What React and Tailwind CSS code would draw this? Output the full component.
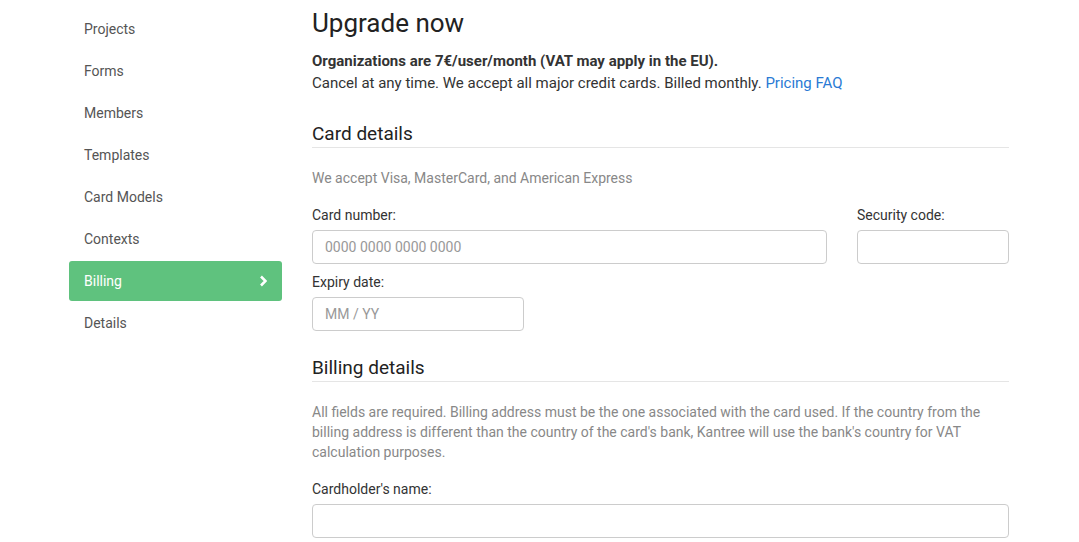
import React from 'react';

const NAV = ['Projects', 'Forms', 'Members', 'Templates', 'Card Models', 'Contexts', 'Billing', 'Details'];

const Field = ({ label, placeholder, className = '', labelClass = '' }) => (
  <div className={className}>
    <label className={`block text-[14px] leading-[20px] text-[#333] ${labelClass}`}>{label}</label>
    <input
      placeholder={placeholder}
      className="block w-full h-[34px] px-3 text-[14px] text-[#555] placeholder:text-[#999] border border-[#ccc] rounded-[4px] outline-none"
    />
  </div>
);

const SectionTitle = ({ children }) => (
  <h3 className="text-[19px] leading-[23px] text-[#222] pb-[2px] border-b border-[#e5e5e5]">{children}</h3>
);

export default function App() {
  return (
    <div className="w-[1079px] h-[542px] overflow-hidden bg-white flex" style={{ fontFamily: 'Roboto, "Liberation Sans", sans-serif' }}>
      {/* sidebar */}
      <nav className="ml-[69px] w-[213px] pt-[9px] flex flex-col gap-[2px]">
        {NAV.map((n) => (
          n === 'Billing' ? (
            <div key={n} className="h-[40px] px-[15px] flex items-center justify-between rounded-[3px] bg-[#5fc27e] text-white text-[14px]">
              <span>{n}</span>
              <svg width="10" height="12" viewBox="0 0 10 12">
                <path d="M4 1.5 L8.5 6 L4 10.5" fill="none" stroke="white" strokeWidth="2.6" />
              </svg>
            </div>
          ) : (
            <div key={n} className="h-[40px] px-[15px] flex items-center text-[14px] text-[#555]">{n}</div>
          )
        ))}
      </nav>

      {/* main */}
      <main className="ml-[30px] w-[697px]">
        <h1 className="mt-[8px] text-[26px] leading-[30px] text-[#222]">Upgrade now</h1>
        <div className="mt-[12px] text-[15px] leading-[22px] text-[#333]">
          <p className="font-bold">Organizations are 7€/user/month (VAT may apply in the EU).</p>
          <p>Cancel at any time. We accept all major credit cards. Billed monthly. <a className="text-[#2a7ad4]">Pricing FAQ</a></p>
        </div>

        <div className="mt-[28px]">
          <SectionTitle>Card details</SectionTitle>
        </div>
        <p className="mt-[20px] text-[14px] leading-[20px] text-[#888]">We accept Visa, MasterCard, and American Express</p>

        <div className="mt-[17px] flex gap-[30px]">
          <Field label="Card number:" placeholder="0000 0000 0000 0000" className="w-[515px]" labelClass="mb-[5px]" />
          <Field label="Security code:" className="w-[152px]" labelClass="mb-[5px]" />
        </div>
        <Field label="Expiry date:" placeholder="MM / YY" className="mt-[8px] w-[212px]" labelClass="mb-[5px]" />

        <div className="mt-[25px]">
          <SectionTitle>Billing details</SectionTitle>
        </div>
        <p className="mt-[20px] text-[14px] leading-[20px] text-[#888]">
          All fields are required. Billing address must be the one associated with the card used. If the country from the billing address is different than the country of the card's bank, Kantree will use the bank's country for VAT calculation purposes.
        </p>
        <Field label="Cardholder's name:" className="mt-[17px]" labelClass="mb-[5px]" />
      </main>
    </div>
  );
}
